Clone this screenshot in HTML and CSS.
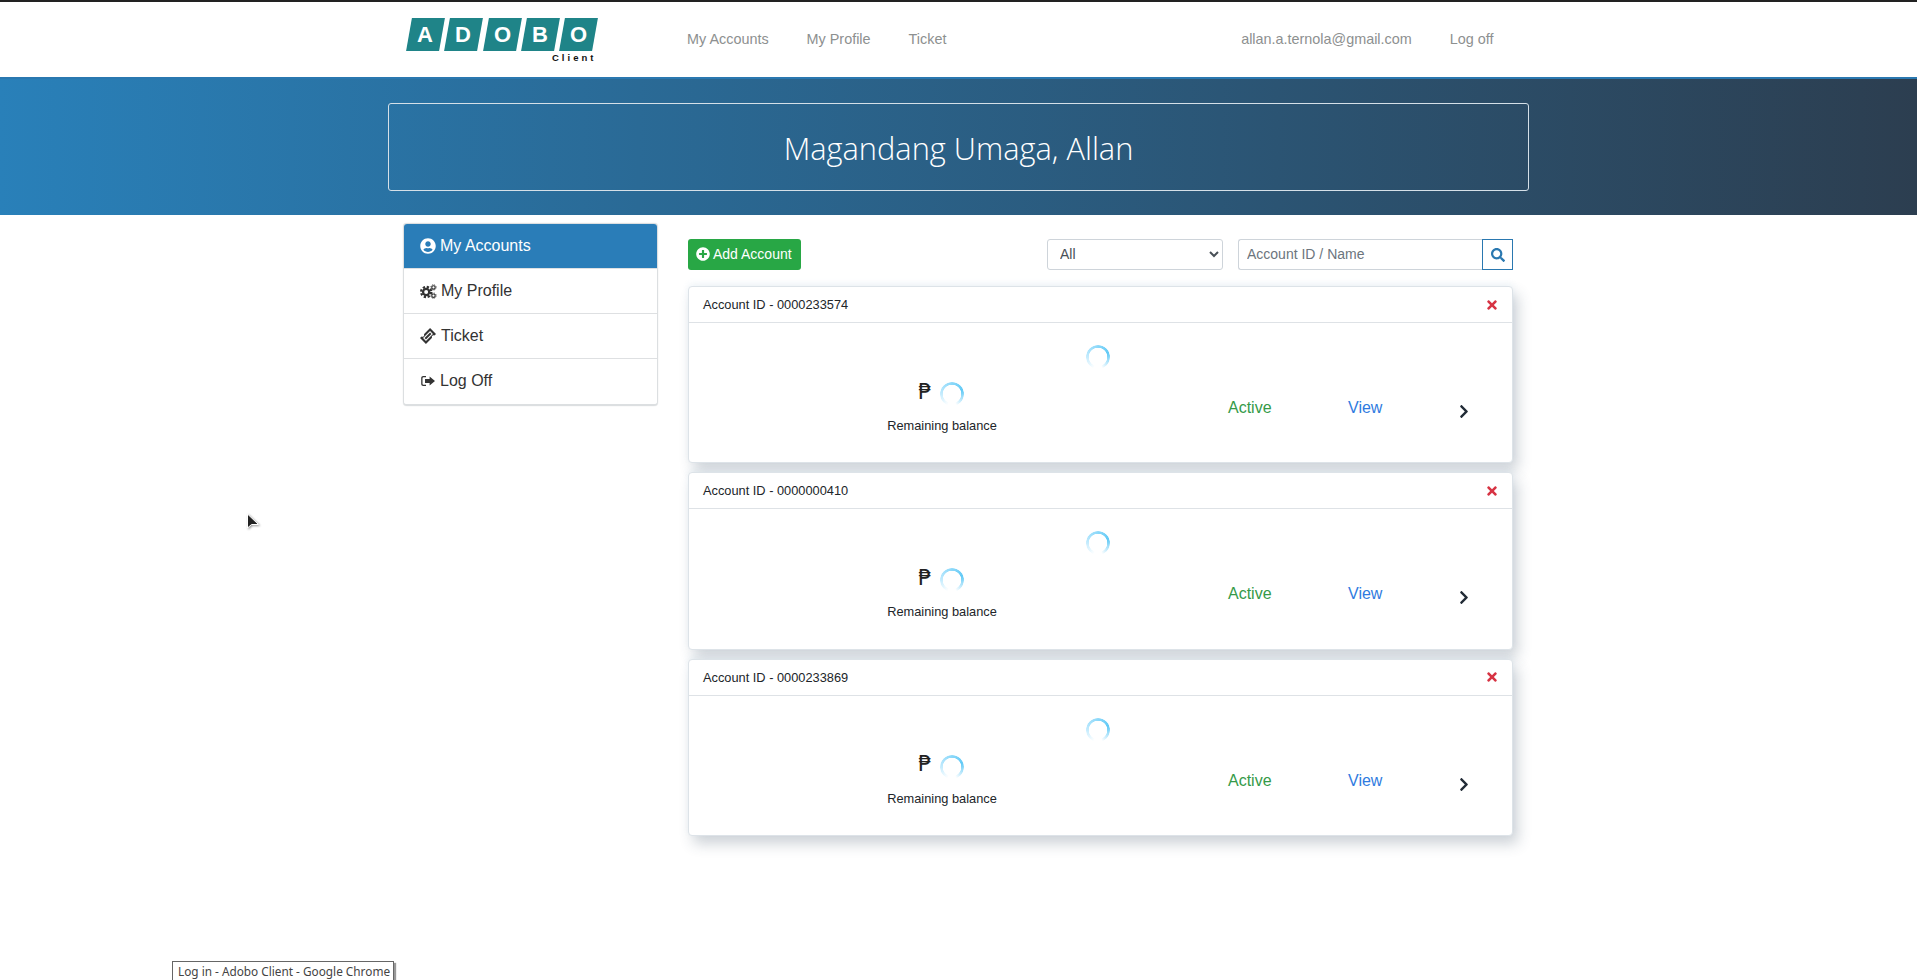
FILE: index.html
```html
<!DOCTYPE html>
<html lang="en">
<head>
<meta charset="utf-8">
<title>Adobo Client</title>
<link rel="stylesheet" href="styles.css">
</head>
<body>
<header class="navbar">
  <div class="container nav-inner">
    <a class="logo">
      <span class="logo-tiles">
        <span class="tile"><b>A</b></span><span class="tile"><b>D</b></span><span class="tile"><b>O</b></span><span class="tile"><b>B</b></span><span class="tile"><b>O</b></span>
      </span>
      <span class="logo-sub">Client</span>
    </a>
    <nav class="nav-links">
      <a>My Accounts</a><a>My Profile</a><a>Ticket</a>
    </nav>
    <nav class="nav-links nav-right">
      <a>allan.a.ternola@gmail.com</a><a>Log off</a>
    </nav>
  </div>
</header>

<section class="banner">
  <div class="container">
    <div class="greeting">Magandang Umaga, Allan</div>
  </div>
</section>

<main class="container content">
  <aside class="side">
    <a class="side-item active">
      <svg class="ico" viewBox="0 0 496 512"><path d="M248 8C111 8 0 119 0 256s111 248 248 248 248-111 248-248S385 8 248 8zm0 96c48.6 0 88 39.4 88 88s-39.4 88-88 88-88-39.4-88-88 39.4-88 88-88zm0 344c-58.7 0-111.3-26.6-146.5-68.2 18.8-35.4 55.6-59.8 98.5-59.8 2.4 0 4.8.4 7.1 1.1 13 4.2 26.6 6.9 40.9 6.9 14.3 0 28-2.7 40.9-6.9 2.3-.7 4.7-1.1 7.1-1.1 42.9 0 79.7 24.4 98.5 59.8C359.3 421.4 306.7 448 248 448z"/></svg>
      My Accounts
    </a>
    <a class="side-item">
      <svg class="ico ico-cogs" viewBox="0 0 18 16">
        <circle class="gear-teeth" cx="6.5" cy="8.5" r="5.4" stroke-width="2.4" stroke-dasharray="2.4 1.840"/>
        <circle class="gear-ring" cx="6.5" cy="8.5" r="3.3" stroke-width="2.4"/>
        <circle class="gear-ring" cx="14.3" cy="3.6" r="1.8" stroke-width="1.2"/>
        <circle class="gear-teeth" cx="14.3" cy="3.6" r="2.8" stroke-width="1" stroke-dasharray="1.2 1"/>
        <circle class="gear-ring" cx="14.3" cy="12.4" r="1.8" stroke-width="1.2"/>
        <circle class="gear-teeth" cx="14.3" cy="12.4" r="2.8" stroke-width="1" stroke-dasharray="1.2 1"/>
      </svg>
      My Profile
    </a>
    <a class="side-item">
      <svg class="ico ico-ticket" viewBox="1 1 14 14"><path fill-rule="evenodd" d="M9.8 1 15 6.200 13.700 7.500C13.100 7.100 12.300 7.200 11.800 7.700 11.300 8.200 11.200 9 11.600 9.600L6.200 15 1 9.800 2.300 8.500C2.900 8.900 3.700 8.800 4.200 8.300 4.700 7.800 4.800 7 4.400 6.400ZM9.800 3.700 3.700 9.800 6.200 12.300 12.300 6.200Z"/><path d="M9.800 5 11 6.200 6.200 11 5 9.800Z"/></svg>
      Ticket
    </a>
    <a class="side-item">
      <svg class="ico ico-out" viewBox="0 0 16 16"><path d="M6 3H3.200C2 3 1.200 3.800 1.200 5V11C1.200 12.200 2 13 3.200 13H6V11.700H3.400C2.900 11.700 2.500 11.300 2.500 10.800V5.200C2.500 4.700 2.900 4.300 3.400 4.300H6Z"/><path d="M9.600 3.400 15 8 9.600 12.600V10H5V6H9.600Z"/></svg>
      Log Off
    </a>
  </aside>

  <section class="accounts">
    <div class="toolbar">
      <button class="btn-add">
        <svg class="ico-sm" viewBox="0 0 512 512"><path d="M256 8C119 8 8 119 8 256s111 248 248 248 248-111 248-248S393 8 256 8zm144 276c0 6.600-5.400 12-12 12h-92v92c0 6.600-5.400 12-12 12h-56c-6.600 0-12-5.400-12-12v-92h-92c-6.600 0-12-5.400-12-12v-56c0-6.600 5.400-12 12-12h92v-92c0-6.600 5.400-12 12-12h56c6.600 0 12 5.400 12 12v92h92c6.600 0 12 5.400 12 12v56z"/></svg>
        Add Account
      </button>
      <select class="filter"><option>All</option></select>
      <div class="search">
        <input class="search-input" type="text" placeholder="Account ID / Name">
        <button class="search-btn">
          <svg class="ico-sm" viewBox="0 0 512 512"><path d="M505 442.700L405.300 343c-4.500-4.500-10.600-7-17-7H372c27.600-35.300 44-79.700 44-128C416 93.100 322.900 0 208 0S0 93.100 0 208s93.100 208 208 208c48.300 0 92.700-16.400 128-44v16.300c0 6.400 2.500 12.500 7 17l99.700 99.700c9.400 9.400 24.600 9.400 33.900 0l28.300-28.300c9.400-9.400 9.400-24.600.1-34zM208 336c-70.700 0-128-57.200-128-128 0-70.700 57.200-128 128-128 70.700 0 128 57.200 128 128 0 70.700-57.200 128-128 128z"/></svg>
        </button>
      </div>
    </div>

    <article class="card">
      <div class="card-head">
        <span>Account ID - 0000233574</span>
        <svg class="ico-close" viewBox="0 0 352 512"><path d="M242.720 256l100.070-100.070c12.280-12.280 12.280-32.190 0-44.480l-22.240-22.240c-12.280-12.280-32.190-12.280-44.480 0L176 189.280 75.930 89.210c-12.280-12.280-32.190-12.280-44.480 0L9.210 111.450c-12.280 12.280-12.280 32.190 0 44.480L109.280 256 9.210 356.070c-12.280 12.280-12.280 32.190 0 44.480l22.240 22.240c12.280 12.280 32.200 12.280 44.480 0L176 322.720l100.070 100.070c12.280 12.280 32.200 12.280 44.480 0l22.240-22.240c12.280-12.280 12.280-32.190 0-44.480L242.720 256z"/></svg>
      </div>
      <div class="card-body">
        <div class="balance">
          <div class="spin-row"><span class="spinner"></span></div>
          <div class="amount"><span class="peso">₱</span><span class="spinner"></span></div>
          <div class="label">Remaining balance</div>
        </div>
        <span class="status">Active</span>
        <a class="view">View</a>
        <svg class="ico-next" viewBox="0 0 320 512"><path d="M285.476 272.971L91.132 467.314c-9.373 9.373-24.569 9.373-33.941 0l-22.667-22.667c-9.357-9.357-9.375-24.522-.04-33.901L188.505 256 34.484 101.255c-9.335-9.379-9.317-24.544.04-33.901l22.667-22.667c9.373-9.373 24.569-9.373 33.941 0L285.475 239.030c9.373 9.372 9.373 24.568.001 33.941z"/></svg>
      </div>
    </article>

    <article class="card">
      <div class="card-head">
        <span>Account ID - 0000000410</span>
        <svg class="ico-close" viewBox="0 0 352 512"><path d="M242.720 256l100.070-100.070c12.280-12.280 12.280-32.190 0-44.480l-22.240-22.240c-12.280-12.280-32.190-12.280-44.480 0L176 189.280 75.930 89.210c-12.280-12.280-32.190-12.280-44.480 0L9.210 111.450c-12.280 12.280-12.280 32.190 0 44.480L109.280 256 9.210 356.070c-12.280 12.280-12.280 32.190 0 44.480l22.240 22.240c12.280 12.280 32.200 12.280 44.480 0L176 322.720l100.070 100.070c12.280 12.280 32.200 12.280 44.480 0l22.240-22.240c12.280-12.280 12.280-32.190 0-44.480L242.720 256z"/></svg>
      </div>
      <div class="card-body">
        <div class="balance">
          <div class="spin-row"><span class="spinner"></span></div>
          <div class="amount"><span class="peso">₱</span><span class="spinner"></span></div>
          <div class="label">Remaining balance</div>
        </div>
        <span class="status">Active</span>
        <a class="view">View</a>
        <svg class="ico-next" viewBox="0 0 320 512"><path d="M285.476 272.971L91.132 467.314c-9.373 9.373-24.569 9.373-33.941 0l-22.667-22.667c-9.357-9.357-9.375-24.522-.04-33.901L188.505 256 34.484 101.255c-9.335-9.379-9.317-24.544.04-33.901l22.667-22.667c9.373-9.373 24.569-9.373 33.941 0L285.475 239.030c9.373 9.372 9.373 24.568.001 33.941z"/></svg>
      </div>
    </article>

    <article class="card">
      <div class="card-head">
        <span>Account ID - 0000233869</span>
        <svg class="ico-close" viewBox="0 0 352 512"><path d="M242.720 256l100.070-100.070c12.280-12.280 12.280-32.190 0-44.480l-22.240-22.240c-12.280-12.280-32.190-12.280-44.480 0L176 189.280 75.930 89.210c-12.280-12.280-32.190-12.280-44.480 0L9.210 111.450c-12.280 12.280-12.280 32.190 0 44.480L109.280 256 9.210 356.070c-12.280 12.280-12.280 32.190 0 44.480l22.240 22.240c12.280 12.280 32.200 12.280 44.480 0L176 322.720l100.070 100.070c12.280 12.280 32.200 12.280 44.480 0l22.240-22.240c12.280-12.280 12.280-32.190 0-44.480L242.720 256z"/></svg>
      </div>
      <div class="card-body">
        <div class="balance">
          <div class="spin-row"><span class="spinner"></span></div>
          <div class="amount"><span class="peso">₱</span><span class="spinner"></span></div>
          <div class="label">Remaining balance</div>
        </div>
        <span class="status">Active</span>
        <a class="view">View</a>
        <svg class="ico-next" viewBox="0 0 320 512"><path d="M285.476 272.971L91.132 467.314c-9.373 9.373-24.569 9.373-33.941 0l-22.667-22.667c-9.357-9.357-9.375-24.522-.04-33.901L188.505 256 34.484 101.255c-9.335-9.379-9.317-24.544.04-33.901l22.667-22.667c9.373-9.373 24.569-9.373 33.941 0L285.475 239.030c9.373 9.372 9.373 24.568.001 33.941z"/></svg>
      </div>
    </article>
  </section>
</main>

<svg class="cursor" viewBox="0 0 14 18"><path d="M1.500 1 1.500 15 5.500 11.500 12.500 11.500Z"/></svg>
<div class="os-tooltip">Log in - Adobo Client - Google Chrome</div>
</body>
</html>
```
FILE: styles.css
```css
* { box-sizing: border-box; }
html, body { height: 100%; }
body {
  margin: 0;
  position: relative;
  overflow: hidden;
  background: #fff;
  color: #212529;
  font-family: "Liberation Sans", Arial, sans-serif;
  font-size: 14px;
}
.container { width: 1141px; margin: 0 auto; }

/* top navigation */
.navbar {
  height: 79px;
  background: #fff;
  border-top: 2px solid #222;
  border-bottom: 2px solid #2a78b0;
}
.nav-inner { display: flex; align-items: center; height: 75px; padding-left: 18px; padding-right: 35.500px; }
.logo { display: block; width: 192px; height: 46px; margin-top: 3px; position: relative; flex: none; }
.logo-tiles { display: flex; gap: 5.600px; padding-left: 3px; }
.tile {
  width: 32.700px;
  height: 33px;
  background: #1f8488;
  transform: skewX(-10deg);
  display: flex;
  align-items: center;
  justify-content: center;
}
.tile b {
  transform: skewX(10deg);
  color: #fff;
  font-weight: 700;
  font-size: 22px;
  line-height: 1;
}
.logo-sub {
  display: block;
  margin-top: 2px;
  margin-left: 146px;
  color: #111;
  font-weight: 700;
  font-size: 9.500px;
  line-height: 10px;
  letter-spacing: 3px;
}
.nav-links { display: flex; gap: 38px; margin-left: 89px; margin-top: -2px; }
.nav-links a { color: #8d9090; font-size: 14.400px; line-height: 20px; }
.nav-right { margin-left: auto; }

/* banner */
.banner {
  height: 136px;
  padding-top: 24px;
  background: linear-gradient(to right, #2980b9, #2c3e50);
}
.greeting {
  height: 88px;
  padding-top: 2px;
  border: 1px solid #d5e0e8;
  border-radius: 3px;
  display: flex;
  align-items: center;
  justify-content: center;
  color: #fff;
  font-family: "Open Sans", sans-serif;
  font-weight: 300;
  font-size: 30.800px;
}

/* layout */
.content {
  display: flex;
  gap: 30px;
  padding-left: 15px;
  padding-top: 8px;
}

/* side menu */
.side {
  width: 255px;
  height: 183px;
  flex: none;
  border: 1px solid #dcdfe1;
  border-bottom-width: 2px;
  border-radius: 4px;
  box-shadow: 0 0 1px rgba(0, 0, 0, .2);
  overflow: hidden;
}
.side-item {
  display: flex;
  align-items: center;
  gap: 4px;
  height: 45px;
  padding-left: 16px;
  font-size: 16px;
  color: #333;
  border-top: 1px solid #dee0e2;
}
.side-item.active {
  height: 45px;
  border-top: 0;
  background: #2a7db8;
  color: #fff;
  margin: -1px -1px 0;
  padding-left: 17px;
}
.ico { width: 16px; height: 16px; fill: currentColor; flex: none; }
.ico-cogs { width: 17px; height: 15px; }
.ico-cogs .gear-teeth, .ico-cogs .gear-ring { fill: none; stroke: #333; }
.ico-ticket { margin-right: 1px; }

/* accounts */
.accounts { width: 825px; flex: none; padding-top: 16px; }
.toolbar { display: flex; align-items: stretch; height: 31px; margin-bottom: 16px; }
.btn-add {
  display: flex;
  align-items: center;
  gap: 3px;
  width: 113px;
  padding: 0 0 2px 8px;
  border: 0;
  border-radius: 3px;
  background: #28a745;
  color: #fff;
  font-family: inherit;
  font-size: 14px;
}
.ico-sm { width: 14px; height: 14px; fill: currentColor; flex: none; }
.filter {
  width: 176px;
  margin-left: auto;
  padding: 0 0 2px 8px;
  border: 1px solid #ced4da;
  border-radius: 3px;
  background: #fff;
  color: #495057;
  font-family: inherit;
  font-size: 14px;
}
.search { display: flex; margin-left: 15px; }
.search-input {
  width: 244px;
  padding: 0 8px 2px;
  border: 1px solid #ced4da;
  border-right: 0;
  border-radius: 3px 0 0 3px;
  color: #495057;
  font-family: inherit;
  font-size: 14px;
}
.search-input::placeholder { color: #6c757d; opacity: 1; }
.search-btn {
  width: 31px;
  padding: 0;
  display: flex;
  align-items: center;
  justify-content: center;
  border: 1px solid #2a78b0;
  background: #fff;
  color: #2a78b0;
}

/* cards */
.card {
  height: 177.400px;
  margin-bottom: 9px;
  border: 1px solid #dde3e8;
  border-radius: 4px;
  background: #fff;
  box-shadow: 5px 8px 14px rgba(50, 70, 90, .24), 0 -3px 6px rgba(120, 170, 210, .08);
}
.card-head {
  display: flex;
  align-items: center;
  justify-content: space-between;
  height: 36px;
  padding: 0 15px 0 14px;
  border-bottom: 1px solid #dee2e6;
  font-size: 12.800px;
  color: #212529;
}
.ico-close { width: 10px; height: 14px; fill: #d73343; }
.card-body { display: flex; height: 140px; }
.balance { width: 506px; flex: none; text-align: center; padding-top: 22px; }
.spin-row { height: 24px; text-align: left; padding-left: 397px; }
.amount {
  display: flex;
  align-items: center;
  justify-content: center;
  gap: 8px;
  height: 24px;
  margin-top: 13px;
  padding-right: 2px;
}
.peso { font-family: "DejaVu Sans", sans-serif; font-size: 21px; line-height: 24px; color: #222; margin-top: -5px; }
.label { margin-top: 11px; font-size: 12.800px; line-height: 17px; color: #212529; }
.spinner {
  display: inline-block;
  width: 24px;
  height: 24px;
  border-radius: 50%;
  background: conic-gradient(from 200deg, rgba(90, 200, 250, 0) 0deg, rgba(90, 200, 250, .45) 90deg, #62caf6 230deg, rgba(70, 190, 245, .2) 300deg, rgba(90, 200, 250, 0) 320deg);
  -webkit-mask: radial-gradient(circle, transparent 9px, #000 9.500px);
  mask: radial-gradient(circle, transparent 9px, #000 9.500px);
}
.status, .view { font-size: 16px; line-height: 24px; margin-top: 73px; height: 24px; }
.status { color: #359a48; margin-left: 33px; width: 120px; }
.view { color: #2f7be0; width: 111px; }
.ico-next { width: 10px; height: 15px; margin-top: 81px; fill: #212b36; }

/* overlays */
.cursor {
  position: absolute;
  left: 246px;
  top: 513px;
  width: 14px;
  height: 18px;
  fill: #222;
  stroke: #fff;
  stroke-width: 1;
  filter: drop-shadow(1px 1px 1px rgba(0, 0, 0, .4));
}
.os-tooltip {
  position: absolute;
  left: 172px;
  top: 961px;
  width: 222px;
  height: 19px;
  padding-left: 5px;
  background: #fff;
  border: 1px solid #666;
  border-bottom: 0;
  box-shadow: 2px 2px 1px rgba(0, 0, 0, .4);
  color: #444;
  font-family: "Noto Sans", sans-serif;
  font-size: 11.800px;
  line-height: 18px;
  white-space: nowrap;
  overflow: hidden;
}
```
